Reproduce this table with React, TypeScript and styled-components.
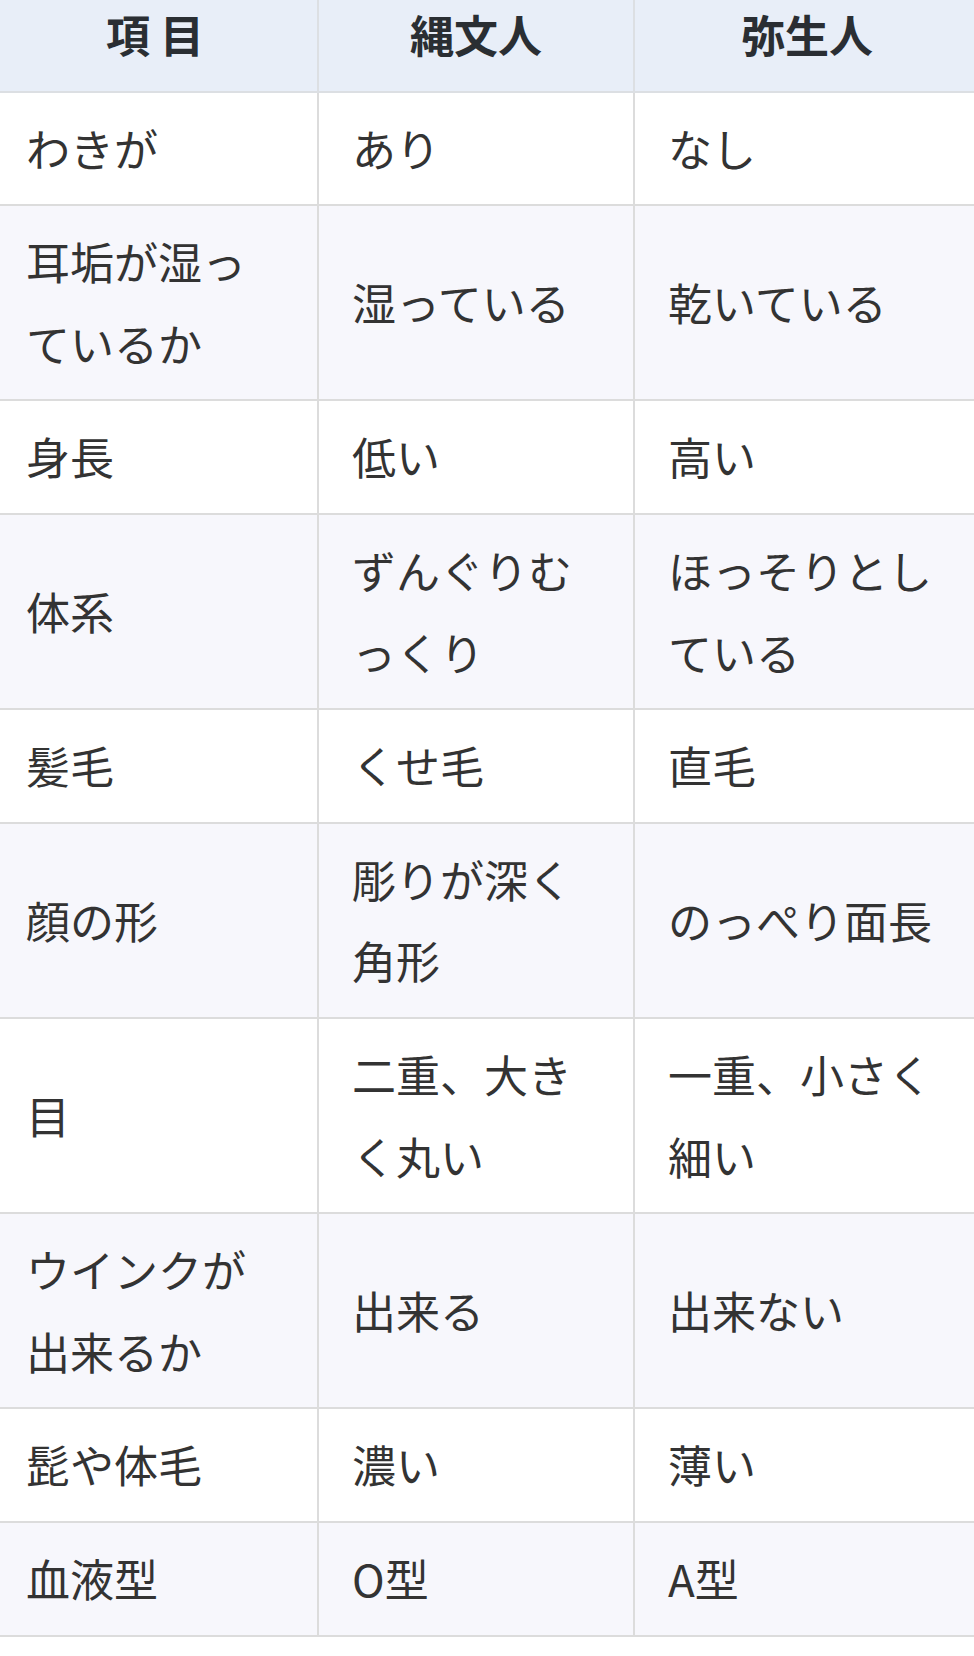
import React from 'react';
import styled, { createGlobalStyle } from 'styled-components';

const GlobalStyle = createGlobalStyle`
  html, body {
    margin: 0;
    padding: 0;
    background: #fff;
  }

  body {
    font-family: "Noto Sans CJK JP", "Noto Sans", sans-serif;
    color: #333;
    overflow: hidden;
  }
`;

const Viewport = styled.div`
  width: 974px;
  height: 1656px;
  overflow: hidden;
`;

const Table = styled.table`
  margin: -23px 0 0 -9px;
  width: 988px;
  table-layout: fixed;
  border-collapse: collapse;
  font-size: 44px;
  line-height: 81.6px;
`;

const HeadCell = styled.th`
  padding: 15px 33px;
  background: #e8eef8;
  color: #2a2e33;
  font-weight: 700;
  text-align: center;
  border: 2px solid #dcdfe3;
`;

const Row = styled.tr<{ $striped: boolean }>`
  background: ${(p) => (p.$striped ? '#f7f7fc' : '#fff')};
`;

const Cell = styled.td`
  padding: 15px 33px;
  text-align: left;
  vertical-align: middle;
  white-space: pre-line;
  border: 2px solid #dcdcdc;
`;

const columns = [
  { title: '項 目', width: 326 },
  { title: '縄文人', width: 316 },
  { title: '弥生人', width: 346 },
];

const rows: [string, string, string][] = [
  ['わきが', 'あり', 'なし'],
  ['耳垢が湿っ\nているか', '湿っている', '乾いている'],
  ['身長', '低い', '高い'],
  ['体系', 'ずんぐりむ\nっくり', 'ほっそりとし\nている'],
  ['髪毛', 'くせ毛', '直毛'],
  ['顔の形', '彫りが深く\n角形', 'のっぺり面長'],
  ['目', '二重、大き\nく丸い', '一重、小さく\n細い'],
  ['ウインクが\n出来るか', '出来る', '出来ない'],
  ['髭や体毛', '濃い', '薄い'],
  ['血液型', 'O型', 'A型'],
];

export default function App() {
  return (
    <>
      <GlobalStyle />
      <Viewport lang="ja">
        <Table>
          <colgroup>
            {columns.map((c) => (
              <col key={c.title} style={{ width: c.width }} />
            ))}
          </colgroup>
          <thead>
            <tr>
              {columns.map((c) => (
                <HeadCell key={c.title}>{c.title}</HeadCell>
              ))}
            </tr>
          </thead>
          <tbody>
            {rows.map((r, i) => (
              <Row key={r[0]} $striped={i % 2 === 1}>
                {r.map((text, j) => (
                  <Cell key={j}>{text}</Cell>
                ))}
              </Row>
            ))}
          </tbody>
        </Table>
      </Viewport>
    </>
  );
}
